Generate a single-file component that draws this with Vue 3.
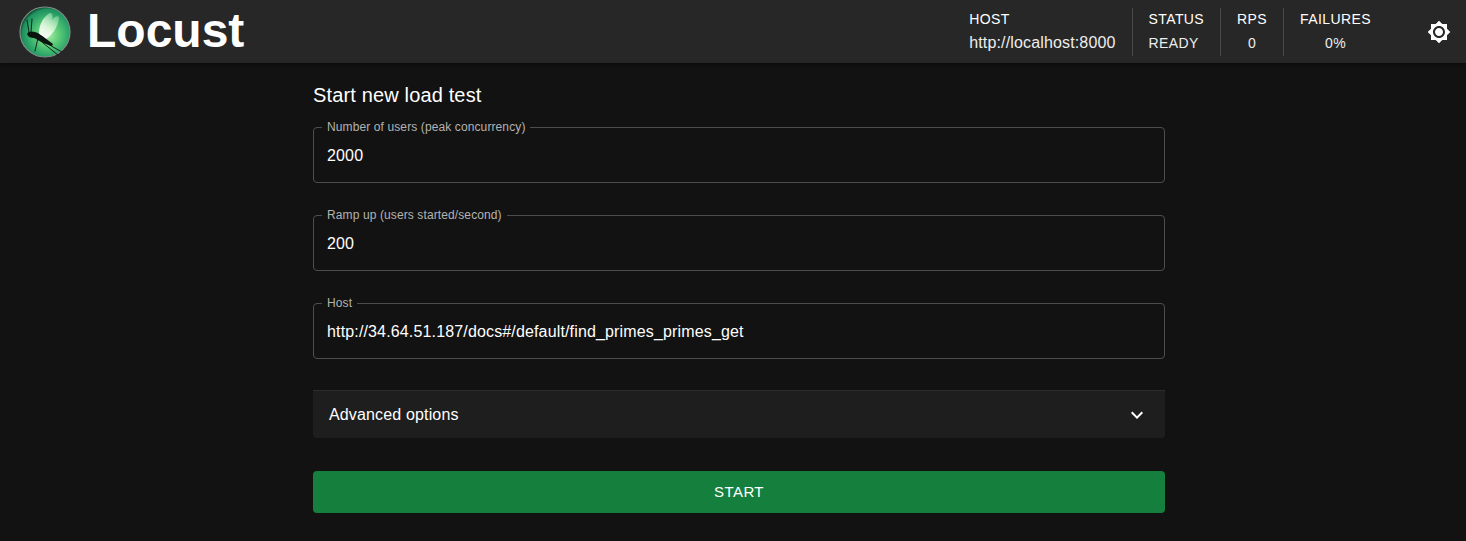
<script setup>
const stats = [
  { label: 'HOST', value: 'http://localhost:8000', left: true },
  { label: 'STATUS', value: 'READY', left: true },
  { label: 'RPS', value: '0' },
  { label: 'FAILURES', value: '0%' },
]
const fields = [
  { label: 'Number of users (peak concurrency)', value: '2000' },
  { label: 'Ramp up (users started/second)', value: '200' },
  { label: 'Host', value: 'http://34.64.51.187/docs#/default/find_primes_primes_get' },
]
</script>

<template>
  <div class="page">
    <header class="topbar">
      <div class="brand">
        <svg class="logo" viewBox="0 0 52 52" aria-hidden="true">
          <defs>
            <radialGradient id="ball" cx="56%" cy="56%" r="56%">
              <stop offset="0" stop-color="#a8eda4" />
              <stop offset="0.4" stop-color="#5ccb78" />
              <stop offset="0.72" stop-color="#2fa86a" />
              <stop offset="0.92" stop-color="#1f8f5e" />
              <stop offset="1" stop-color="#0f5636" />
            </radialGradient>
            <linearGradient id="wing" x1="0.15" y1="0.95" x2="0.8" y2="0.05">
              <stop offset="0" stop-color="#ffffff" />
              <stop offset="0.45" stop-color="#effdea" stop-opacity="0.8" />
              <stop offset="1" stop-color="#d8f5d8" stop-opacity="0.35" />
            </linearGradient>
          </defs>
          <circle cx="26" cy="26" r="25" fill="url(#ball)" stroke="#7f8f86" stroke-width="1.2" />
          <path d="M20 27 C20 18 25 10 31 7 C34 7 34 11 33 14 C35 11 39 9 40 11 C40 18 35 28 27 33 C24 33 21 31 20 27 Z" fill="url(#wing)" />
          <path d="M8 28 C9 25 13 25 16 26 C20 27 23 30 26 32 L34 38 L33 40 L24 37 C20 35 18 33 15 32 C12 32 9 31 8 28 Z" fill="#0a1510" />
          <g fill="none" stroke="#0a1510" stroke-width="0.9" stroke-linecap="round">
            <path d="M12 26 L13 13 M10 26 L8 14" />
            <path d="M19 32 L16 45 M24 37 L39 49 M27 37 L43 46" />
          </g>
        </svg>
        <span class="wordmark">Locust</span>
      </div>
      <div class="stats">
        <div v-for="s in stats" :key="s.label" class="stat" :class="{ left: s.left }">
          <div class="stat-label">{{ s.label }}</div>
          <div class="stat-value">{{ s.value }}</div>
        </div>
        <svg class="mode" viewBox="0 0 24 24" aria-hidden="true">
          <path d="M20 8.69V4h-4.69L12 .69 8.69 4H4v4.69L.69 12 4 15.31V20h4.69L12 23.31 15.31 20H20v-4.69L23.31 12 20 8.69zM12 18c-3.31 0-6-2.69-6-6s2.69-6 6-6 6 2.69 6 6-2.69 6-6 6zm0-10c-2.21 0-4 1.79-4 4s1.79 4 4 4 4-1.79 4-4-1.79-4-4-4z" />
        </svg>
      </div>
    </header>

    <main class="content">
      <h1 class="title">Start new load test</h1>
      <form class="form" @submit.prevent>
        <fieldset v-for="f in fields" :key="f.label" class="field">
          <legend>{{ f.label }}</legend>
          <input :value="f.value" />
        </fieldset>
        <div class="accordion">
          <span>Advanced options</span>
          <svg class="chev" viewBox="0 0 24 24" aria-hidden="true">
            <path d="M16.59 8.59 12 13.17 7.41 8.59 6 10l6 6 6-6z" />
          </svg>
        </div>
        <button class="start" type="submit">START</button>
      </form>
    </main>
  </div>
</template>

<style>
html, body { background: #121212; }
</style>

<style scoped>
.page {
  min-height: 541px;
  background: #121212;
  color: #fff;
  font-family: "Liberation Sans", Arial, sans-serif;
}
.topbar {
  height: 63px;
  box-sizing: border-box;
  background: #272727;
  display: flex;
  align-items: center;
  justify-content: space-between;
  padding: 0 15px 0 19px;
  box-shadow: 0 1px 3px rgba(0, 0, 0, 0.5);
}
.brand { display: flex; align-items: center; gap: 16px; }
.logo { width: 52px; height: 52px; display: block; }
.wordmark { font-size: 48px; font-weight: 700; line-height: 1; margin-top: -1px; }
.stats { display: flex; align-items: center; }
.stat {
  height: 48px;
  box-sizing: border-box;
  padding: 0 16px;
  border-right: 1px solid #4a4a4a;
  display: flex;
  flex-direction: column;
  align-items: center;
  font-size: 14px;
  line-height: 24px;
  letter-spacing: 0.4px;
}
.stat.left { align-items: flex-start; }
.stat:nth-child(4) { border-right: 0; }
.stat-label { margin-top: -1px; }
.stat-value { color: #eee; }
.stat:first-child .stat-value { font-size: 16px; letter-spacing: 0.15px; }
.mode { width: 24px; height: 24px; fill: #fff; margin-left: 40px; }
.content {
  width: 852px;
  margin-left: 313px;
  padding-top: 20px;
}
.title { margin: 0; font-size: 20px; font-weight: 400; line-height: 24px; letter-spacing: 0.15px; }
.form { margin-top: 12px; display: flex; flex-direction: column; }
.field {
  margin: 0 0 24px;
  padding: 0 13px;
  height: 64px;
  box-sizing: border-box;
  border: 1px solid #4d4d4d;
  border-radius: 4px;
  min-width: 0;
}
.field:nth-of-type(3) { margin-bottom: 31px; }
.field legend {
  padding: 0 5px;
  margin-left: -5px;
  font-size: 12px;
  line-height: 16px;
  letter-spacing: 0.11px;
  color: #b3b3b3;
}
.field input {
  display: block;
  width: 100%;
  height: 42px;
  padding: 0;
  border: 0;
  outline: 0;
  background: transparent;
  color: #fff;
  font: 16px "Liberation Sans", Arial, sans-serif;
  letter-spacing: 0.15px;
}
.accordion {
  height: 48px;
  box-sizing: border-box;
  background: #1e1e1e;
  border-top: 1px solid #2c2c2c;
  border-radius: 0 0 4px 4px;
  padding: 0 16px;
  display: flex;
  align-items: center;
  justify-content: space-between;
  font-size: 16px;
  letter-spacing: 0.15px;
}
.chev { width: 24px; height: 24px; fill: #fff; }
.start {
  margin-top: 33px;
  height: 42px;
  padding: 0 0 2px;
  border: 0;
  border-radius: 4px;
  background: #15803d;
  color: #fff;
  font: 500 15px "Liberation Sans", Arial, sans-serif;
  letter-spacing: 0.43px;
}
</style>
